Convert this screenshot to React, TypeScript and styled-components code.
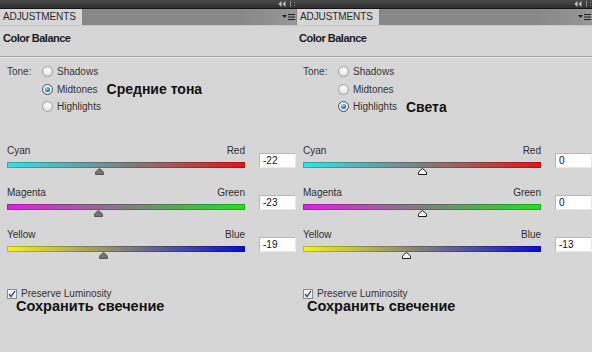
import React from "react";
import styled, { createGlobalStyle } from "styled-components";

const GlobalStyle = createGlobalStyle`
  html, body {
    margin: 0;
    padding: 0;
    background: #d6d6d6;
  }
  body {
    width: 592px;
    height: 352px;
    overflow: hidden;
    font-family: "Liberation Sans", Arial, sans-serif;
  }
`;

const Screen = styled.div`
  display: flex;
  width: 592px;
  height: 352px;
  background: #d6d6d6;
`;

const Panel = styled.div`
  flex: none;
  width: 296px;
  height: 352px;
  display: flex;
  flex-direction: column;
  background: #d6d6d6;
`;

const TopBar = styled.div`
  height: 8px;
  background: linear-gradient(#4a4a4a, #2f2f2f);
  border-bottom: 1px solid #151515;
  display: flex;
  justify-content: flex-end;
  align-items: center;
`;

const TabBar = styled.div`
  height: 16px;
  display: flex;
  align-items: stretch;
  background: linear-gradient(to right, #878787 80%, #979797);
  border-bottom: 1px solid #c9c9c9;
`;

const Tab = styled.div<{ $inset: number }>`
  width: 82px;
  margin-left: ${(p) => p.$inset}px;
  box-sizing: border-box;
  padding-left: 3px;
  background: #d6d6d6;
  color: #2b2b2b;
  font-size: 10px;
  line-height: 16px;
  letter-spacing: -0.1px;
`;

const MenuButton = styled.div`
  margin-left: auto;
  padding-right: 1px;
  display: flex;
  align-items: center;
`;

const Header = styled.div`
  height: 30px;
  box-sizing: border-box;
  padding: 5px 0 0 3px;
  font-size: 11px;
  line-height: 14px;
  font-weight: bold;
  letter-spacing: -0.5px;
  color: #1c1c1c;
`;

const Divider = styled.div`
  height: 0;
  border-top: 1px solid #a2a2a2;
  border-bottom: 1px solid #e6e6e6;
`;

const ToneBlock = styled.div`
  display: grid;
  grid-template-columns: 35px 1fr;
  padding-left: 7px;
  margin-top: 5px;
`;

const ToneLabel = styled.div`
  font-size: 10px;
  line-height: 17.5px;
  color: #3a3a3a;
`;

const ToneList = styled.div`
  display: flex;
  flex-direction: column;
`;

const ToneRow = styled.div`
  height: 17.5px;
  display: flex;
  align-items: center;
`;

const Radio = styled.span<{ $on?: boolean }>`
  width: 11px;
  height: 11px;
  box-sizing: border-box;
  border-radius: 50%;
  border: 1px solid ${(p) => (p.$on ? "#505050" : "#a0a0a0")};
  background: radial-gradient(circle at 50% 30%, #ffffff, #d8d8d8);
  display: flex;
  align-items: center;
  justify-content: center;

  &::after {
    content: "";
    display: ${(p) => (p.$on ? "block" : "none")};
    width: 5px;
    height: 5px;
    border-radius: 50%;
    background: radial-gradient(circle at 40% 35%, #9ad8ff, #1f78c0 60%, #0c4478);
  }
`;

const OptionText = styled.span`
  margin-left: 4px;
  font-size: 10px;
  color: #333;
`;

const Note = styled.span`
  margin-left: 9px;
  font-size: 14px;
  font-weight: bold;
  color: #111;
  line-height: 14px;
`;

const Sliders = styled.div`
  margin-top: 29.5px;
  padding-left: 7px;
  display: flex;
  flex-direction: column;
`;

const SliderRow = styled.div`
  height: 42px;
  display: grid;
  grid-template-columns: 238px 37px;
  column-gap: 14px;
  align-items: start;
`;

const SliderBody = styled.div`
  display: flex;
  flex-direction: column;
`;

const Ends = styled.div`
  display: flex;
  justify-content: space-between;
  font-size: 10px;
  line-height: 12px;
  height: 12px;
  color: #2e2e2e;
`;

const Bar = styled.div<{ $from: string; $to: string }>`
  margin-top: 5px;
  height: 6px;
  background: linear-gradient(to right, ${(p) => p.$from}, #7f7f7f 50%, ${(p) => p.$to});
  box-shadow: inset 0 0 0 1px rgba(0, 0, 0, 0.22);
`;

const ThumbTrack = styled.div`
  height: 7px;
  display: flex;
`;

const ValueBox = styled.div`
  margin-top: 8px;
  height: 15px;
  box-sizing: border-box;
  background: #ffffff;
  border: 1px solid #b8b8b8;
  border-bottom-color: #e8e8e8;
  border-right-color: #e8e8e8;
  padding-left: 3px;
  font-size: 10px;
  line-height: 13px;
  color: #111;
`;

const CheckRow = styled.div`
  margin-top: 17px;
  padding-left: 7px;
  height: 11px;
  display: flex;
  align-items: center;
`;

const CheckBox = styled.span`
  width: 10px;
  height: 10px;
  box-sizing: border-box;
  border: 1px solid #8a8a8a;
  background: linear-gradient(#ffffff, #e4e4e4);
  display: flex;
  align-items: center;
  justify-content: center;
`;

const CheckText = styled.span`
  margin-left: 4px;
  font-size: 10px;
  color: #333;
`;

const Caption = styled.div<{ $indent: number }>`
  padding-left: ${(p) => p.$indent}px;
  font-size: 14.5px;
  line-height: 14px;
  font-weight: bold;
  color: #111;
`;

const CollapseIcon = () => (
  <svg width="18" height="8" viewBox="0 0 18 8">
    <polygon points="3.5,1 0.5,4 3.5,7" fill="#c4c4c4" />
    <polygon points="7.5,1 4.5,4 7.5,7" fill="#c4c4c4" />
    <line x1="12.5" y1="1" x2="12.5" y2="7" stroke="#8a8a8a" />
    <rect x="16" y="2" width="1" height="1" fill="#9a9a9a" />
    <rect x="16" y="5" width="1" height="1" fill="#9a9a9a" />
  </svg>
);

const FlyoutIcon = () => (
  <svg width="13" height="8" viewBox="0 0 13 8">
    <polygon points="0,2 5,2 2.5,5" fill="#1e1e1e" />
    <line x1="6" y1="1.5" x2="13" y2="1.5" stroke="#1e1e1e" />
    <line x1="6" y1="4" x2="13" y2="4" stroke="#1e1e1e" />
    <line x1="6" y1="6.5" x2="13" y2="6.5" stroke="#1e1e1e" />
  </svg>
);

const Thumb = ({ filled, x }: { filled: boolean; x: number }) => (
  <svg
    width="9"
    height="7"
    viewBox="0 0 9 7"
    style={{ marginLeft: x - 4.5 }}
  >
    <path
      d="M0.5 6.5 L0.5 4.8 Q0.5 4 1.3 3.2 L4.5 0.5 L7.7 3.2 Q8.5 4 8.5 4.8 L8.5 6.5 Z"
      fill={filled ? "#737373" : "#ffffff"}
      stroke={filled ? "#555" : "#1a1a1a"}
      strokeWidth="1"
    />
  </svg>
);

const CheckMark = () => (
  <svg width="8" height="8" viewBox="0 0 8 8">
    <path d="M1 4 L3 6.5 L7 0.8" fill="none" stroke="#2a55a8" strokeWidth="1.4" />
  </svg>
);

type Channel = { left: string; right: string; from: string; to: string; value: number };

type PanelData = {
  tone: number;
  note: string;
  tabInset: number;
  captionIndent: number;
  filledThumbs: boolean;
  values: number[];
};

const channels: Omit<Channel, "value">[] = [
  { left: "Cyan", right: "Red", from: "#2fe2ea", to: "#e41515" },
  { left: "Magenta", right: "Green", from: "#e21ee2", to: "#1fe01f" },
  { left: "Yellow", right: "Blue", from: "#f2f218", to: "#0c0cd2" },
];

const tones = ["Shadows", "Midtones", "Highlights"];

const panels: PanelData[] = [
  { tone: 1, note: "Средние тона", tabInset: 0, captionIndent: 16, filledThumbs: true, values: [-22, -23, -19] },
  { tone: 2, note: "Света", tabInset: 1, captionIndent: 11, filledThumbs: false, values: [0, 0, -13] },
];

const BAR_WIDTH = 238;

const AdjustmentsPanel = ({ data }: { data: PanelData }) => (
  <Panel>
    <TopBar>
      <CollapseIcon />
    </TopBar>
    <TabBar>
      <Tab $inset={data.tabInset}>ADJUSTMENTS</Tab>
      <MenuButton>
        <FlyoutIcon />
      </MenuButton>
    </TabBar>
    <Header>Color Balance</Header>
    <Divider />
    <ToneBlock>
      <ToneLabel>Tone:</ToneLabel>
      <ToneList>
        {tones.map((t, i) => (
          <ToneRow key={t}>
            <Radio $on={i === data.tone} />
            <OptionText>{t}</OptionText>
            {i === data.tone && <Note>{data.note}</Note>}
          </ToneRow>
        ))}
      </ToneList>
    </ToneBlock>
    <Sliders>
      {channels.map((c, i) => {
        const v = data.values[i];
        const x = BAR_WIDTH / 2 + (v / 100) * (BAR_WIDTH / 2);
        return (
          <SliderRow key={c.left}>
            <SliderBody>
              <Ends>
                <span>{c.left}</span>
                <span>{c.right}</span>
              </Ends>
              <Bar $from={c.from} $to={c.to} />
              <ThumbTrack>
                <Thumb filled={data.filledThumbs} x={x} />
              </ThumbTrack>
            </SliderBody>
            <ValueBox>{v}</ValueBox>
          </SliderRow>
        );
      })}
    </Sliders>
    <CheckRow>
      <CheckBox>
        <CheckMark />
      </CheckBox>
      <CheckText>Preserve Luminosity</CheckText>
    </CheckRow>
    <Caption $indent={data.captionIndent}>Сохранить свечение</Caption>
  </Panel>
);

const App: React.FC = () => (
  <>
    <GlobalStyle />
    <Screen>
      {panels.map((p, i) => (
        <AdjustmentsPanel key={i} data={p} />
      ))}
    </Screen>
  </>
);

export default App;
